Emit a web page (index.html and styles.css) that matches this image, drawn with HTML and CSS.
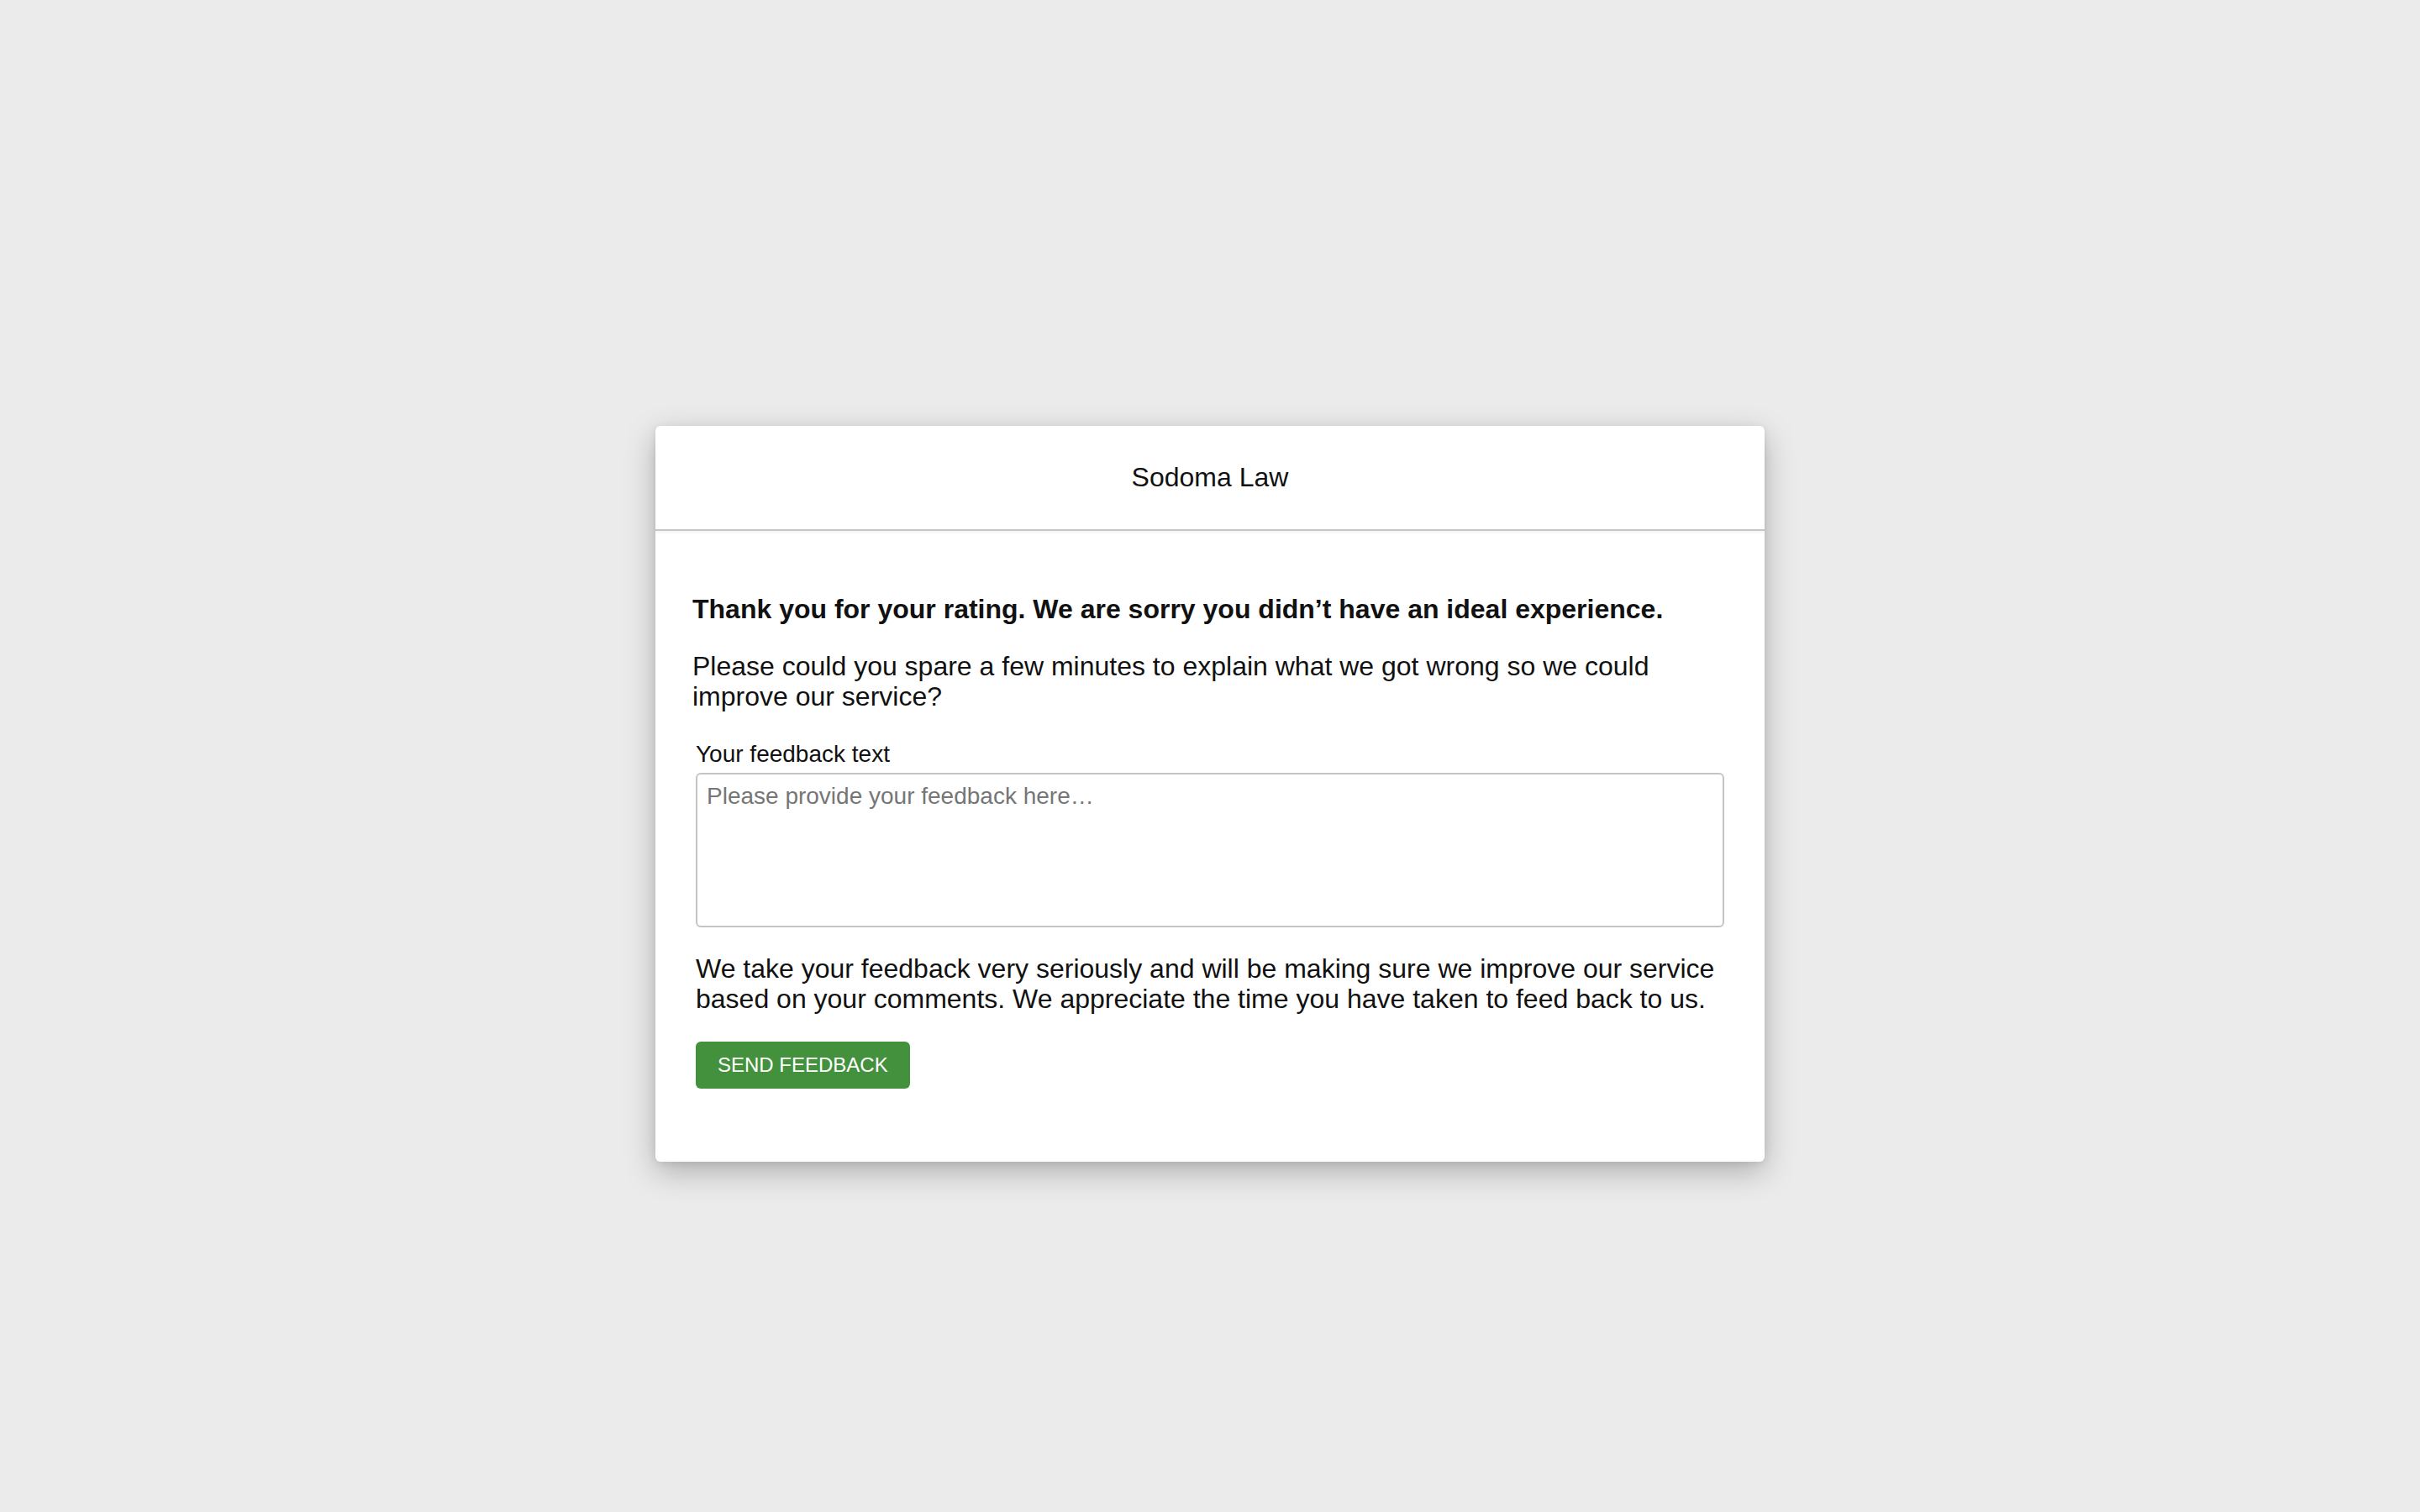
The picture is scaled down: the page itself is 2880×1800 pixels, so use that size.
FILE: index.html
```html
<!DOCTYPE html>
<html lang="en">
<head>
<meta charset="utf-8">
<title>Sodoma Law - Feedback</title>
<link rel="stylesheet" href="styles.css">
</head>
<body>
<div class="page">
  <div class="card">
    <div class="card-header">Sodoma Law</div>
    <div class="card-body">
      <h1 class="heading">Thank you for your rating. We are sorry you didn’t have an ideal experience.</h1>
      <p class="intro">Please could you spare a few minutes to explain what we got wrong so we could improve our service?</p>
      <form class="form">
        <label class="label" for="feedback">Your feedback text</label>
        <textarea class="textarea" id="feedback" placeholder="Please provide your feedback here…"></textarea>
        <p class="note">We take your feedback very seriously and will be making sure we improve our service based on your comments. We appreciate the time you have taken to feed back to us.</p>
        <button type="button" class="button">Send Feedback</button>
      </form>
    </div>
  </div>
</div>
</body>
</html>
```
FILE: styles.css
```css
html, body {
  margin: 0;
  padding: 0;
  background: #ebebeb;
}
body {
  font-family: "Liberation Sans", Arial, Helvetica, sans-serif;
  color: #111111;
}
.page {
  box-sizing: border-box;
  min-height: 100vh;
  display: flex;
  justify-content: center;
  align-items: flex-start;
  padding: 507px 0 120px 0;
}
.card {
  width: 1320px;
  background: #ffffff;
  border-radius: 6px;
  box-shadow: 0 12px 36px rgba(0, 0, 0, 0.26), 0 2px 10px rgba(0, 0, 0, 0.08);
}
.card-header {
  height: 123px;
  display: flex;
  align-items: center;
  justify-content: center;
  font-size: 32px;
  border-bottom: 2px solid #c6c6c6;
  box-shadow: 0 2px 3px rgba(0, 0, 0, 0.05);
}
.card-body {
  padding: 75px 44px 87px 44px;
}
.heading {
  margin: 0 0 32px 0;
  font-size: 32px;
  line-height: 36px;
  font-weight: bold;
}
.intro {
  margin: 0 0 35px 0;
  font-size: 32px;
  line-height: 36px;
}
.form {
  display: flex;
  flex-direction: column;
  align-items: flex-start;
  padding: 0 4px;
}
.label {
  font-size: 28px;
  line-height: 32px;
  margin-bottom: 6px;
}
.textarea {
  box-sizing: border-box;
  width: 100%;
  height: 184px;
  margin: 0;
  padding: 10px 11px;
  border: 2px solid #c4c4c4;
  border-radius: 6px;
  font-family: "Liberation Sans", Arial, Helvetica, sans-serif;
  font-size: 28px;
  line-height: 32px;
  color: #111111;
  resize: none;
  outline: none;
}
.textarea::placeholder {
  color: #767676;
}
.note {
  margin: 31px 0 33px 0;
  font-size: 32px;
  line-height: 36px;
}
.button {
  height: 56px;
  padding: 0 26px;
  border: none;
  border-radius: 6px;
  background: #43913c;
  color: #ffffff;
  font-family: "Liberation Sans", Arial, Helvetica, sans-serif;
  font-size: 24px;
  text-transform: uppercase;
  cursor: pointer;
}
```
